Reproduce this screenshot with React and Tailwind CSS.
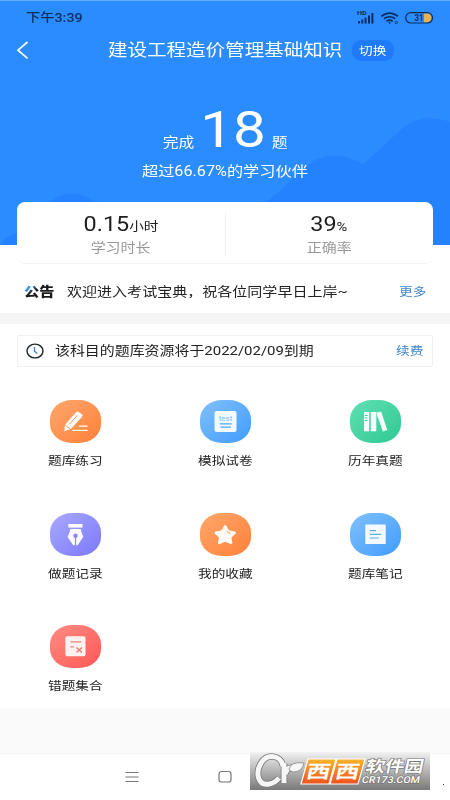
import React from 'react';
import clsx from 'clsx';

const FONT = "font-[Roboto,'Noto_Sans_CJK_SC',sans-serif]";

const ITEMS = [
  { label: '题库练习', icon: PencilIcon, bg: 'from-[#ffa76a] to-[#ff8038]' },
  { label: '模拟试卷', icon: TestIcon, bg: 'from-[#7fc0fc] to-[#3f9cfc]' },
  { label: '历年真题', icon: BooksIcon, bg: 'from-[#5fe0b4] to-[#2cc893]' },
  { label: '做题记录', icon: PenIcon, bg: 'from-[#a9a8fd] to-[#7d78fb]' },
  { label: '我的收藏', icon: StarIcon, bg: 'from-[#ffa76a] to-[#ff8038]' },
  { label: '题库笔记', icon: NoteIcon, bg: 'from-[#7fc0fc] to-[#3f9cfc]' },
  { label: '错题集合', icon: WrongIcon, bg: 'from-[#ff8b85] to-[#ff5654]' },
];

// Wide text used everywhere on the screen
function Wide({ children, className }) {
  return <span className={clsx('inline-block whitespace-nowrap scale-x-[1.17]', className)}>{children}</span>;
}

function PencilIcon() {
  return (
    <svg viewBox="0 0 50 43" className="w-full h-full" fill="#fff">
      <path d="M13.6 31.5 14.6 24.5 25.5 12.3Q26.7 11 28 12L31.6 14.6Q32.6 15.5 31.6 16.8L20.6 28.7Z" />
      <path d="M27 15.2 18.8 24.4M15 25.5 19.5 28.7" stroke="#ff9350" strokeWidth="1" fill="none" />
      <path d="M29 26.2h7.5M22.5 30.4h14" stroke="#fff" strokeWidth="1.3" strokeLinecap="round" />
    </svg>
  );
}

function TestIcon() {
  return (
    <svg viewBox="0 0 50 43" className="w-full h-full">
      <rect x="14" y="11" width="22" height="21" rx="2" fill="#f2f9ff" />
      <text x="25" y="20.6" textAnchor="middle" fontSize="6.5" textLength="13.5" lengthAdjust="spacingAndGlyphs" fill="#7dbcf7">test</text>
      <path d="M19.3 23.9h12M20 27.2h10.5" stroke="#55a6f2" strokeWidth="1.2" />
    </svg>
  );
}

function BooksIcon() {
  return (
    <svg viewBox="0 0 50 43" className="w-full h-full" fill="#f4fffb">
      <rect x="13.5" y="12" width="5.2" height="19.3" />
      <rect x="20.3" y="12" width="5.5" height="19.3" />
      <path d="m25.8 12.8 4.8-1.3 6.2 18.5-4.5 1.4Z" />
      <path d="M14.3 15.5h2.8M14.3 18h2.8M14.3 20.5h2.8" stroke="#3ccb9a" strokeWidth="1" />
    </svg>
  );
}

function PenIcon() {
  return (
    <svg viewBox="0 0 50 43" className="w-full h-full" fill="#fafaff">
      <rect x="17.8" y="11" width="14.2" height="3.6" />
      <path d="M20 16h10.2q.8 4 2.6 7.8L27.2 32.2h-4.5L17 24q2-3.8 3-8Z" />
      <path d="M25 24v9" stroke="#8c88fb" strokeWidth="1.2" />
      <circle cx="25" cy="22.8" r="2.2" fill="#8c88fb" />
    </svg>
  );
}

function StarIcon() {
  return (
    <svg viewBox="0 0 50 43" className="w-full h-full">
      <path d="m24.7 13.4 2.9 5.2 6.5 1.1-4.5 4.3 1 5.9-5.9-2.5-5.9 2.5 1-5.9-4.5-4.3 6.5-1.1Z" fill="#fffaf6" stroke="#fffaf6" strokeWidth="2.6" strokeLinejoin="round" />
      <path d="m26.3 18.3 1.3 1.2 1.7.8" stroke="#ff9350" strokeWidth="1" strokeLinecap="round" fill="none" />
    </svg>
  );
}

function NoteIcon() {
  return (
    <svg viewBox="0 0 50 43" className="w-full h-full">
      <rect x="14.8" y="11.5" width="20.4" height="19.5" fill="#f2f9ff" />
      <path d="M19.3 17.6h6.2M19.3 21.3h11.4M19.3 25h9" stroke="#55b2e8" strokeWidth="1.2" />
    </svg>
  );
}

function WrongIcon() {
  return (
    <svg viewBox="0 0 50 43" className="w-full h-full">
      <rect x="14.8" y="11.3" width="20.2" height="20" rx="1.8" fill="#fff1f0" />
      <path d="M19.8 16.8h11M19.8 21.8h3.4" stroke="#e28583" strokeWidth="1.2" />
      <path d="m26 22.5 5.4 5M31.4 22.5l-5.4 5" stroke="#e57876" strokeWidth="1.3" />
    </svg>
  );
}

function StatusBar() {
  return (
    <div className="h-[34px] pl-[26px] pr-[16px] flex items-center justify-between border-t border-[#62adff] text-[#0a2f66]">
      <Wide className="origin-left text-[12.2px] leading-4 font-medium">下午3:39</Wide>
      <svg width="78" height="16" viewBox="0 0 78 16" fill="#0b2c62" className="-mt-[2px]">
        <text x="1" y="5.8" fontSize="6" fontWeight="700" textLength="9.5" lengthAdjust="spacingAndGlyphs">HD</text>
        <path d="M2 12h2V14.500H2zM5.300 10.500h2v4h-2zM8.600 8.800h2v5.700h-2zM12 6.500h2v8h-2zM15.400 4h2v10.500h-2z" />
        <g fill="none" stroke="#0b2c62" strokeWidth="1.7">
          <path d="M25.3 7.2q8.3-6 16.6 0M27.9 9.8q5.7-4.1 11.400 0M30.500 12.200q3.100-2 6.200 0" />
        </g>
        <circle cx="33.6" cy="13.7" r="1" />
        <circle cx="40.3" cy="13.5" r="1.2" fill="none" stroke="#0b2c62" strokeWidth=".8" />
        <path d="M68 4.200h3q4.500 0 4.500 4.600t-4.500 4.600h-3z" fill="#e8b04e" />
        <rect x="49.7" y="3.600" width="26.8" height="10.400" rx="5.2" fill="none" stroke="#0b2c62" strokeWidth="1.2" />
        <text x="58.5" y="11.900" fontSize="8.5" fontWeight="700" textLength="9" lengthAdjust="spacingAndGlyphs">31</text>
      </svg>
    </div>
  );
}

function Header() {
  return (
    <header className="relative h-[245px] bg-[#2b8cff] text-white">
      <svg className="absolute inset-0 w-full h-full" viewBox="0 0 450 245" fill="#2481ff">
        <path d="M266 203 308 165Q319 155.5 336 156 350 156 363 164.5L404 127Q416 118 431 118.5 442 118.5 450 122V245H266Z" />
        <path d="M50 203Q58 194 72 193.5 86 194 95 203V245H50ZM0 245Q5 236 17 233V245Z" />
      </svg>
      <div className="relative">
        <StatusBar />
        <div className="h-[33px] flex items-center">
          <svg width="13" height="20" viewBox="0 0 13 20" className="ml-[16px] -mt-px" fill="none" stroke="#fff" strokeWidth="1.7">
            <path d="M11.5 2 2 10.2 11.5 18.3" />
          </svg>
          <div className="ml-[79px] w-[234px] pt-px flex justify-center">
            <Wide className="text-[16.7px] leading-6">建设工程造价管理基础知识</Wide>
          </div>
          <div className="ml-[10px] w-[42px] h-[21px] rounded-[9px] bg-[#1f7bfc] flex items-center justify-center">
            <Wide className="text-[11.7px] leading-4">切换</Wide>
          </div>
        </div>
        <div className="mt-[33px] h-[60px] flex items-baseline justify-center">
          <div className="w-[32px] flex justify-center"><Wide className="text-[13.5px]">完成</Wide></div>
          <div className="w-[77px] flex justify-center"><Wide className="text-[50px] leading-[60px]">18</Wide></div>
          <div className="w-[16px] flex justify-center"><Wide className="text-[13.5px]">题</Wide></div>
        </div>
        <div className="h-[22px] flex items-center justify-center">
          <Wide className="text-[13.85px] leading-5">超过66.67%的学习伙伴</Wide>
        </div>
      </div>
    </header>
  );
}

function Stat({ value, unit, label }) {
  return (
    <div className="flex-1 flex flex-col items-center pt-[9px]">
      <Wide className="text-[20px] leading-[26px] h-[26px] text-[#1c1c1c]">
        {value}<span className="text-[12.5px]">{unit}</span>
      </Wide>
      <Wide className="mt-px text-[12.8px] leading-[20px] text-[#999]">{label}</Wide>
    </div>
  );
}

function Watermark() {
  return (
    <div className="absolute left-[250px] top-[752px] w-[180px] h-[38px] bg-linear-to-b from-[#f2f2f2] to-[#7a7a7a]">
      <svg viewBox="0 0 180 38" className="w-full h-full">
        <defs>
          <linearGradient id="orange" x1="0" y1="0" x2="0" y2="1">
            <stop offset="0" stopColor="#f9b52b" />
            <stop offset="1" stopColor="#f0521d" />
          </linearGradient>
        </defs>
        <g fill="none">
          <path d="M33 14C31 3 17 1 11 11S8 34 19 32Q25 31 29 26M34 11V31M35 22Q37 15 43 16" stroke="#777" strokeWidth="6.5" />
          <path d="M33 14C31 3 17 1 11 11S8 34 19 32Q25 31 29 26M34 11V31M35 22Q37 15 43 16" stroke="#f6f6f6" strokeWidth="5" />
        </g>
        <path d="M39 18Q40 9 54 11 52 20 43 20Z" fill="#f6f6f6" stroke="#888" strokeWidth=".8" />
        <g stroke="#fff" strokeWidth="1.2" fill="url(#orange)">
          <path d="M58 7H86L79 32H51Z" />
          <path d="M87 7H115L108 32H80Z" />
        </g>
        <g fill="#fff" fontWeight="700" fontFamily="'Noto Sans CJK SC'" transform="skewX(-12)">
          <text x="61" y="26.5" fontSize="18" textLength="24" lengthAdjust="spacingAndGlyphs">西</text>
          <text x="90" y="26.5" fontSize="18" textLength="24" lengthAdjust="spacingAndGlyphs">西</text>
          <g stroke="#777" strokeWidth="1.3" paintOrder="stroke">
            <text x="119" y="20.5" fontSize="16" textLength="58" lengthAdjust="spacingAndGlyphs">软件园</text>
            <text x="118" y="31.5" fontSize="9.5" fontFamily="Roboto" fontWeight="500" textLength="58" lengthAdjust="spacingAndGlyphs">CR173.COM</text>
          </g>
        </g>
      </svg>
    </div>
  );
}

export default function App() {
  return (
    <div className={clsx('relative w-[450px] h-[800px] overflow-hidden bg-white', FONT)}>
      <Header />

      {/* Study stats */}
      <div className="relative -mt-[43px] mx-[17px] h-[62px] rounded-[8px] bg-white flex border-b border-[#f3f3f3]">
        <Stat value="0.15" unit="小时" label="学习时长" />
        <div className="w-px h-[44px] mt-[10px] bg-[#f1f1f1]" />
        <Stat value="39" unit="%" label="正确率" />
      </div>

      {/* Notice */}
      <div className="h-[49px] pt-[7px] px-[24px] flex items-center">
        <div className="w-[43px] flex">
          <span className="origin-left scale-x-[1.17] bg-linear-to-br from-[#3c92e8] from-25% to-[#1b1b1b] to-38% bg-clip-text text-transparent text-[13px] leading-5 font-black whitespace-nowrap">公告</span>
        </div>
        <Wide className="origin-left text-[12.85px] leading-5 text-[#222]">欢迎进入考试宝典，祝各位同学早日上岸~</Wide>
        <Wide className="ml-auto origin-right text-[11.7px] leading-5 text-[#3f86c8]">更多</Wide>
      </div>
      <div className="h-[11px] bg-[#f5f5f5]" />

      {/* Expiry */}
      <div className="mt-[11px] mx-[17px] h-[32px] border border-[#f0f0f0] rounded-[2px] pl-[8px] pr-[9px] flex items-center">
        <svg width="18" height="16" viewBox="0 0 18 16" fill="none">
          <ellipse cx="9" cy="8" rx="8" ry="6.9" stroke="#202830" strokeWidth="1.4" />
          <path d="M8.5 4v4.3l2.8 2.2" stroke="#3b82d8" strokeWidth="1.3" />
        </svg>
        <Wide className="ml-[11px] origin-left text-[12.78px] leading-5 text-[#222]">该科目的题库资源将于2022/02/09到期</Wide>
        <Wide className="ml-auto origin-right text-[11.7px] leading-5 text-[#3f86c8]">续费</Wide>
      </div>

      {/* Menu */}
      <div className="h-[341px] pt-[33px] grid grid-cols-3 auto-rows-[112.5px] content-start">
        {ITEMS.map(({ label, icon: Icon, bg }) => (
          <div key={label} className="flex flex-col items-center">
            <div className={clsx('w-[51px] h-[43px] rounded-[22px/19px] bg-linear-to-br', bg)}>
              <Icon />
            </div>
            <Wide className="mt-[8px] text-[11.7px] leading-5 text-[#222]">{label}</Wide>
          </div>
        ))}
      </div>
      <div className="h-[46px] bg-[#fafafa] border-b border-[#f4f4f4]" />

      {/* System nav */}
      <div className="h-[46px] pl-[125px] pt-[14px] flex">
        <svg width="14" height="16" viewBox="0 0 14 16" stroke="#777" strokeWidth="1.1">
          <path d="M.5 4.5h13M.5 9h13M.5 13.5h13" />
        </svg>
        <svg width="16" height="16" viewBox="0 0 16 16" className="ml-[78px]" fill="none" stroke="#777" strokeWidth="1.2">
          <rect x="2" y="3.5" width="12" height="10.5" rx="2.5" />
        </svg>
      </div>

      <Watermark />
      <div className="absolute left-[443px] top-[784px] w-px h-px bg-[#333]" />
    </div>
  );
}
